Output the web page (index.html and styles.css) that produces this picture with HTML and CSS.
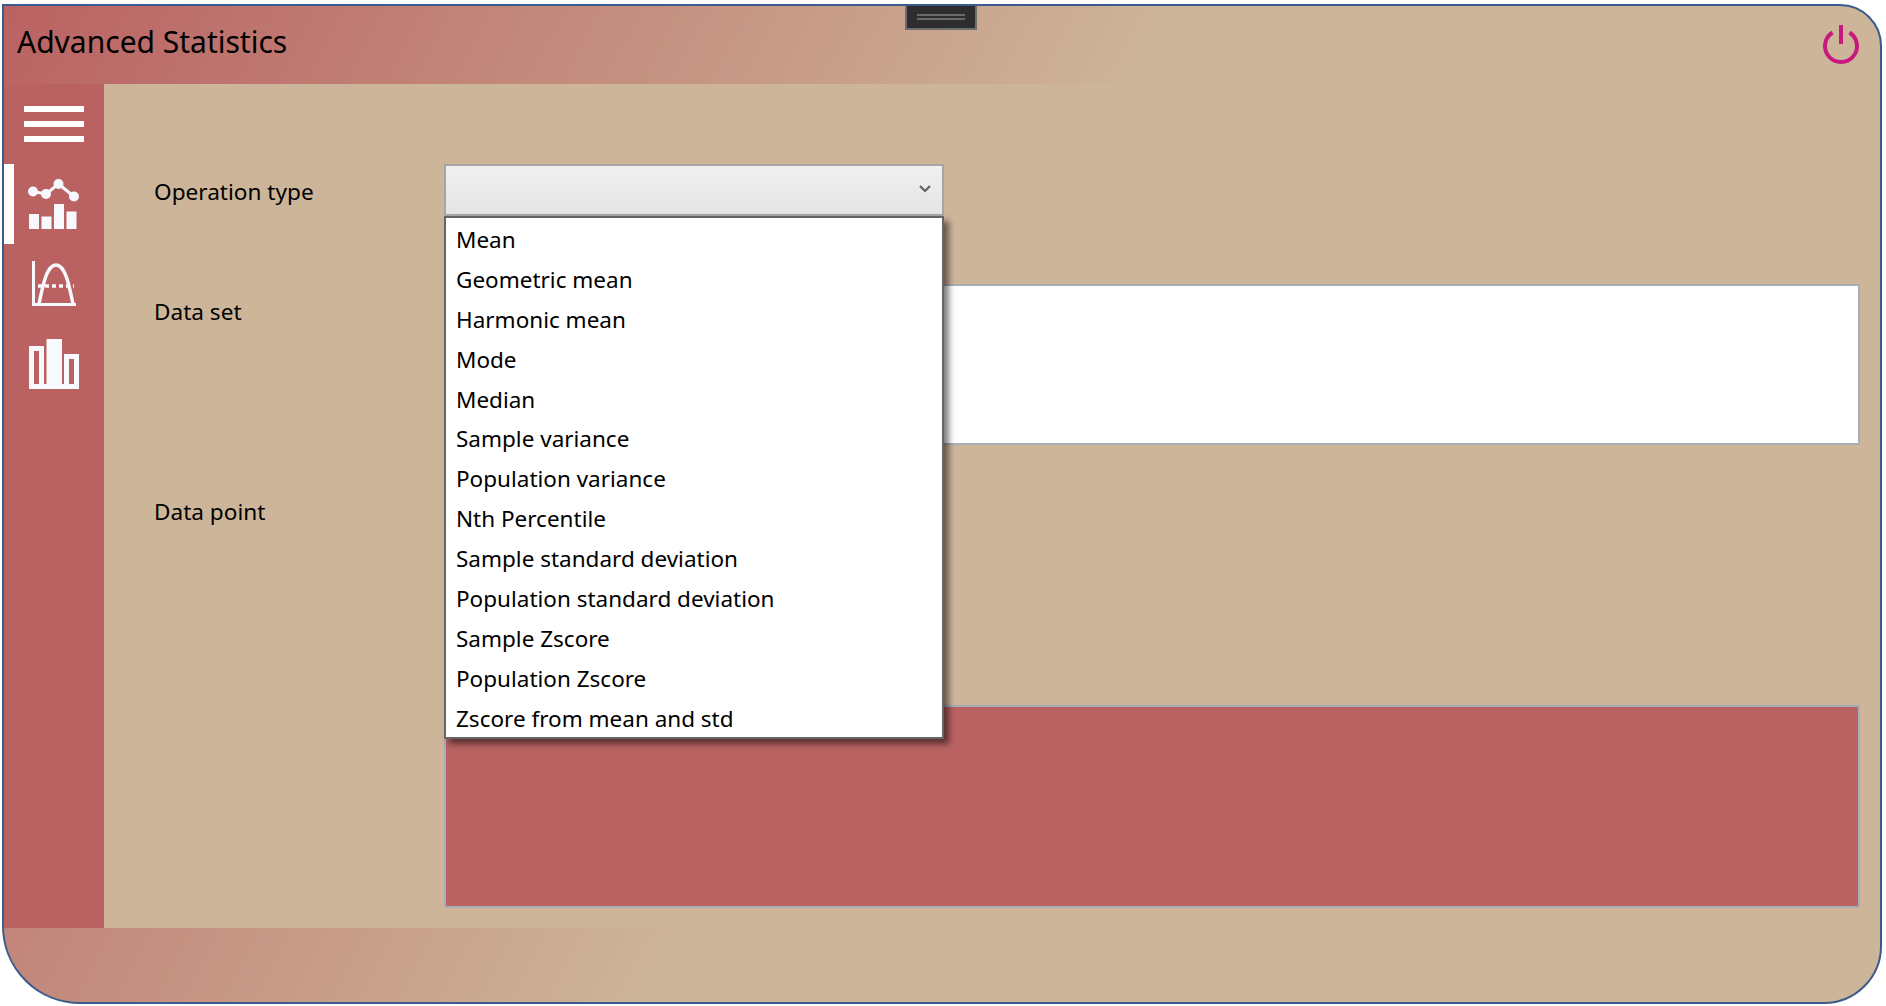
FILE: index.html
```html
<!DOCTYPE html>
<html lang="en">
<head>
<meta charset="utf-8">
<title>Advanced Statistics</title>
<link rel="stylesheet" href="styles.css">
</head>
<body>
<div class="window">
  <div class="drag-handle"><span class="drag-line"></span><span class="drag-line"></span></div>
  <header class="titlebar">
    <h1 class="title">Advanced Statistics</h1>
    <svg class="power" width="40" height="40" viewBox="0 0 40 40" fill="none" stroke="#c8187f" stroke-width="4">
      <path d="M11.5 8.5 A16 16 0 1 0 28.5 8.5"/>
      <path d="M20 1 V20"/>
    </svg>
  </header>
  <div class="middle">
    <nav class="sidebar">
      <div class="nav-item">
        <div class="hamburger"><span></span><span></span><span></span></div>
      </div>
      <div class="nav-item nav-item-active">
        <svg class="icon-trend" width="50" height="52" viewBox="0 0 50 52" fill="#f8f9ff">
          <path d="M4 7.5 L17 10 L29.5 0 L45 12.500" fill="none" stroke="#f8f9ff" stroke-width="3"/>
          <circle cx="4" cy="7.500" r="5"/><circle cx="17" cy="10" r="5"/><circle cx="29.500" cy="0" r="5"/><circle cx="45" cy="12.500" r="5"/>
          <rect x="0" y="30" width="10" height="15"/><rect x="12.500" y="32.500" width="10" height="12.500"/><rect x="25" y="20" width="10" height="25"/><rect x="37.500" y="27.500" width="10" height="17.500"/>
        </svg>
      </div>
      <div class="nav-item">
        <svg class="icon-bell" width="48" height="48" viewBox="0 0 48 48" fill="none" stroke="#f8f9ff">
          <path d="M5.500 1 V44.500 H48" stroke-width="3"/>
          <path d="M11 44 C15 24 19 5 28 5 C37 5 41 24 45 44" stroke-width="3.500"/>
          <path d="M10 26 H46" stroke-width="3.500" stroke-dasharray="4 3"/>
        </svg>
      </div>
      <div class="nav-item">
        <svg width="50" height="50" viewBox="0 0 50 50" fill="#f8f9ff">
          <path d="M0 7 H15 V45 H0 Z M5 12 V45 H10 V12 Z" fill-rule="evenodd"/>
          <rect x="17.500" y="0" width="15.500" height="45"/>
          <path d="M35 15 H50 V45 H35 Z M40 20 V45 H45 V20 Z" fill-rule="evenodd"/>
          <rect x="0" y="45" width="50" height="5"/>
        </svg>
      </div>
    </nav>
    <main class="content">
      <div class="label">Operation type</div>
      <div class="select-wrap">
        <div class="select">
          <svg class="chevron" width="12" height="8" viewBox="0 0 12 8" fill="none" stroke="#606060" stroke-width="2.200"><path d="M1 1 L6 6 L11 1"/></svg>
        </div>
        <ul class="dropdown">
          <li>Mean</li>
          <li>Geometric mean</li>
          <li>Harmonic mean</li>
          <li>Mode</li>
          <li>Median</li>
          <li>Sample variance</li>
          <li>Population variance</li>
          <li>Nth Percentile</li>
          <li>Sample standard deviation</li>
          <li>Population standard deviation</li>
          <li>Sample Zscore</li>
          <li>Population Zscore</li>
          <li>Zscore from mean and std</li>
        </ul>
      </div>
      <div class="label">Data set</div>
      <div class="dataset"></div>
      <div class="label label-point">Data point</div>
      <div class="spacer"></div>
      <div class="spacer"></div>
      <div class="result"></div>
    </main>
  </div>
  <footer class="footer"></footer>
</div>
</body>
</html>
```
FILE: styles.css
```css
* { box-sizing: border-box; }
html, body { margin: 0; height: 100%; background: #fff; }
body {
  padding: 4px 4px 2px 2px;
  font-family: "Noto Sans", "Open Sans", sans-serif;
  color: #000;
}
.window {
  position: relative;
  height: 1000px;
  display: flex;
  flex-direction: column;
  border: 2px solid #3b5b8c;
  border-radius: 0 42px 58px 78px;
  overflow: hidden;
  background: #cdb599 linear-gradient(118deg, #ba6262 0%, #cdb599 49%);
}
.drag-handle {
  position: absolute;
  top: -2px;
  left: 901px;
  width: 72px;
  height: 26px;
  display: flex;
  flex-direction: column;
  align-items: center;
  justify-content: center;
  gap: 2px;
  background: #2d2d30;
  border: 2px solid #6e6e6e;
}
.drag-line { width: 48px; height: 2px; background: #6a6a6a; }
.titlebar {
  height: 78px;
  flex: none;
  display: flex;
  align-items: center;
  justify-content: space-between;
  padding: 0 19px 6px 13px;
}
.title { margin: 0; font-size: 30px; font-weight: 400; line-height: 1; }
.power { margin-top: 4px; overflow: visible; }
.middle { flex: 1; display: flex; min-height: 0; }
.sidebar {
  width: 100px;
  flex: none;
  background: #ba6262;
}
.nav-item {
  height: 80px;
  display: flex;
  align-items: center;
  justify-content: center;
  position: relative;
}
.nav-item-active::before {
  content: "";
  position: absolute;
  left: 0;
  top: 0;
  width: 10px;
  height: 80px;
  background: #fff;
}
.nav-item svg { overflow: visible; }
.icon-trend { margin-top: 12px; }
.icon-bell { margin-left: -4px; }
.hamburger { display: flex; flex-direction: column; gap: 9px; width: 60px; }
.hamburger span { height: 6px; background: #fff; }
.content {
  flex: 1;
  background: #cdb599;
  padding: 80px 20px 0 50px;
  display: grid;
  grid-template-columns: 290px 1fr;
  grid-template-rows: 80px 161px 180px 203px;
  row-gap: 40px;
}
.label { font-size: 22.6px; line-height: 30px; padding-top: 12.5px; }
.label-point { padding-top: 11.5px; }
.select-wrap { position: relative; z-index: 2; width: 500px; }
.select {
  height: 52px;
  border: 2px solid #a6a6a6;
  background: linear-gradient(#f0f0f0, #e4e4e4);
  display: flex;
  align-items: center;
  justify-content: flex-end;
  padding: 0 11px 0 0;
}
.chevron { margin-top: -2px; }
.dropdown {
  position: absolute;
  left: 0;
  top: 52px;
  width: 500px;
  margin: 0;
  padding: 0;
  list-style: none;
  background: #fff;
  border: 2px solid #666;
  box-shadow: 5px 5px 6px rgba(0, 0, 0, 0.5);
}
.dropdown li {
  height: 39.9px;
  padding: 2px 0 0 10px;
  font-size: 22.5px;
  line-height: 39px;
  white-space: nowrap;
}
.dataset { background: #fff; border: 2px solid #a8aeb8; }
.result { background: #ba6262; border: 2px solid #a8aeb8; }
.footer { height: 74px; flex: none; }
```
